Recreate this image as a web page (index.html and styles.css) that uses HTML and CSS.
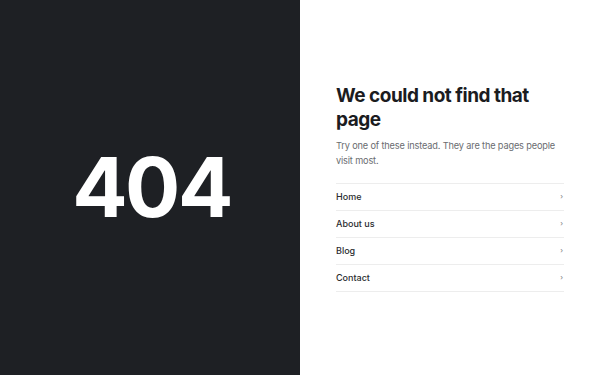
FILE: index.html
```html
<!DOCTYPE html>
<html lang="en">
<head>
<meta charset="utf-8">
<link rel="stylesheet" href="styles.css">
</head>
<body>
<main class="page">
  <section class="code-panel">
    <div class="code">404</div>
  </section>
  <section class="info-panel">
    <div class="info">
      <h1 class="title">We could not find that page</h1>
      <p class="lead">Try one of these instead. They are the pages people visit most.</p>
      <ul class="links">
        <li><a class="link" href="#"><span>Home</span><span class="chev">›</span></a></li>
        <li><a class="link" href="#"><span>About us</span><span class="chev">›</span></a></li>
        <li><a class="link" href="#"><span>Blog</span><span class="chev">›</span></a></li>
        <li><a class="link" href="#"><span>Contact</span><span class="chev">›</span></a></li>
      </ul>
    </div>
  </section>
</main>
</body>
</html>
```
FILE: styles.css
```css
* { box-sizing: border-box; }
html, body { margin: 0; padding: 0; }
body {
  font-family: Inter, "Noto Sans", sans-serif;
  background: #fff;
}
.page {
  display: grid;
  grid-template-columns: 300px 300px;
  height: 375px;
  width: 600px;
}
.code-panel {
  background: #1e2024;
  display: flex;
  align-items: center;
  justify-content: center;
}
.code {
  color: #fff;
  font-size: 82px;
  font-weight: 700;
  letter-spacing: -2.5px;
  line-height: 1;
  margin-left: 3px;
}
.info-panel {
  display: flex;
  align-items: center;
  padding: 0 36px;
}
.info { width: 100%; }
.title {
  margin: 0;
  font-size: 19px;
  line-height: 24px;
  font-weight: 700;
  color: #1b1c1f;
  letter-spacing: -0.5px;
  padding-right: 20px;
}
.lead {
  margin: 6px 0 15px;
  font-size: 9.2px;
  line-height: 15px;
  color: #6a6c70;
  letter-spacing: -0.15px;
  padding-right: 8px;
}
.links {
  list-style: none;
  margin: 0;
  padding: 0;
  border-top: 1px solid #ededed;
}
.links li { border-bottom: 1px solid #ededed; }
.link {
  display: flex;
  justify-content: space-between;
  align-items: center;
  height: 26px;
  text-decoration: none;
  color: #2a2c30;
  font-size: 9px;
  font-weight: 500;
}
.chev {
  font-size: 7px;
  color: #888;
  padding-right: 1px;
}
```
